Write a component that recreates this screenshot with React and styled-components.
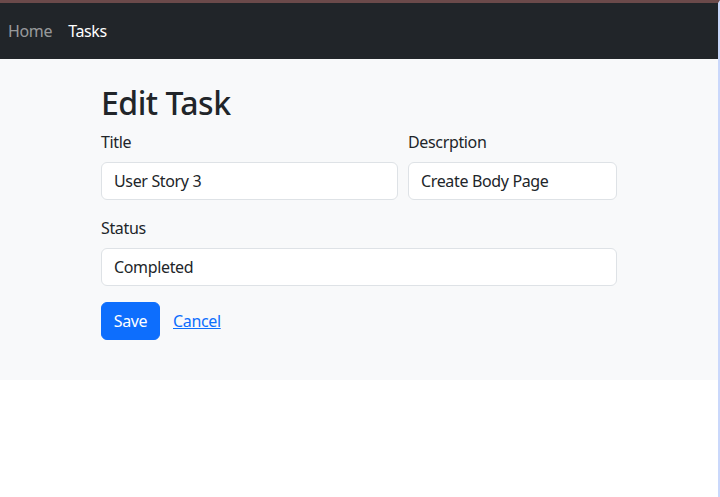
import React from 'react'
import styled, { createGlobalStyle } from 'styled-components'

const GlobalStyle = createGlobalStyle`
    * { box-sizing: border-box; }
    body {
        margin: 0;
        font-family: "Noto Sans", "Open Sans", sans-serif;
        font-size: 16px;
        letter-spacing: -0.35px;
        color: #212529;
        background: #fff;
    }
`

function Field(props) {
    return (
        <FieldWrap>
            <Label>{props.label}</Label>
            <Input defaultValue={props.value} />
        </FieldWrap>
    )
}

export default function App() {
    return (
        <Frame>
            <GlobalStyle />
            <Navbar>
                <NavLink>Home</NavLink>
                <NavLink active>Tasks</NavLink>
            </Navbar>
            <Section>
                <Container>
                    <Heading>Edit Task</Heading>
                    <Row>
                        <Field label="Title" value="User Story 3" />
                        <Field label="Descrption" value="Create Body Page" />
                    </Row>
                    <Field label="Status" value="Completed" />
                    <Actions>
                        <SaveButton>Save</SaveButton>
                        <CancelLink href="#">Cancel</CancelLink>
                    </Actions>
                </Container>
            </Section>
        </Frame>
    )
}

const Frame = styled.div`
    min-height: 100vh;
    border-top: 3px solid #6b4a4a;
    border-right: 2px solid #cad8fb;
`

const Navbar = styled.nav`
    height: 56px;
    background: #212529;
    display: flex;
    align-items: center;
    gap: 16px;
    padding-left: 8px;
`

const NavLink = styled.span`
    color: ${props => props.active ? '#ffffff' : 'rgba(255, 255, 255, 0.55)'};
    font-size: 16px;
    cursor: pointer;
`

const Section = styled.div`
    background: #f8f9fa;
    padding: 24px 0 40px;
`

const Container = styled.div`
    width: 516px;
    margin-left: 101px;
    display: flex;
    flex-direction: column;
    gap: 16px;
`

const Heading = styled.h1`
    margin: 0 0 -8px;
    font-size: 32px;
    font-weight: 500;
    letter-spacing: -0.5px;
    line-height: 39px;
`

const Row = styled.div`
    display: grid;
    grid-template-columns: 297px 209px;
    gap: 10px;
`

const FieldWrap = styled.div`
    display: flex;
    flex-direction: column;
`

const Label = styled.label`
    line-height: 24px;
    margin-bottom: 8px;
`

const Input = styled.input`
    height: 38px;
    padding: 6px 12px;
    font: inherit;
    letter-spacing: inherit;
    color: #212529;
    background: #fff;
    border: 1px solid #dee2e6;
    border-radius: 6px;
    outline: none;
`

const Actions = styled.div`
    display: flex;
    align-items: center;
    gap: 13px;
`

const SaveButton = styled.button`
    height: 38px;
    width: 59px;
    font: inherit;
    letter-spacing: inherit;
    color: #fff;
    background: #0d6efd;
    border: 1px solid #0d6efd;
    border-radius: 6px;
    cursor: pointer;
`

const CancelLink = styled.a`
    color: #0d6efd;
    text-decoration: underline;
`
